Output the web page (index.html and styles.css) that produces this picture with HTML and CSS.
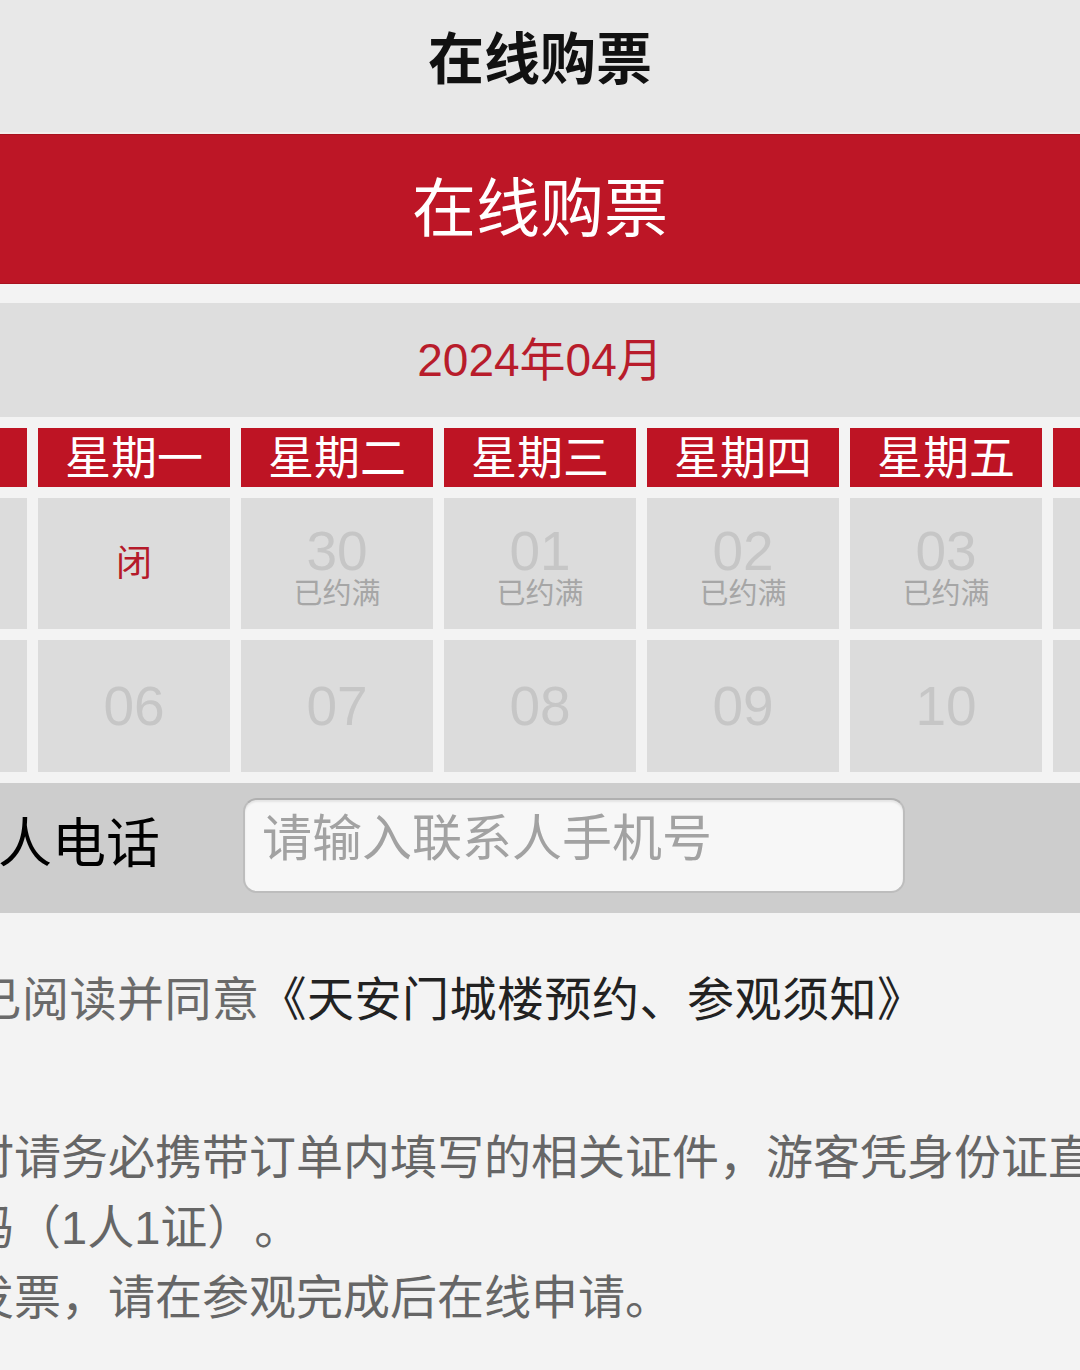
FILE: index.html
```html
<!DOCTYPE html>
<html lang="zh-CN">
<head>
	<meta charset="UTF-8">
	<title>在线购票</title>
	<link rel="stylesheet" href="styles.css">
</head>
<body>
	<div class="page">
		<div class="topbar">在线购票</div>
		<div class="banner">在线购票</div>
		<div class="month">2024年04月</div>

		<div class="calendar">
			<div class="week">星期日</div>
			<div class="week">星期一</div>
			<div class="week">星期二</div>
			<div class="week">星期三</div>
			<div class="week">星期四</div>
			<div class="week">星期五</div>
			<div class="week">星期六</div>

			<div class="day full"><span class="num">28</span><span class="state">已约满</span></div>
			<div class="day"><span class="closed">闭</span></div>
			<div class="day full"><span class="num">30</span><span class="state">已约满</span></div>
			<div class="day full"><span class="num">01</span><span class="state">已约满</span></div>
			<div class="day full"><span class="num">02</span><span class="state">已约满</span></div>
			<div class="day full"><span class="num">03</span><span class="state">已约满</span></div>
			<div class="day full"><span class="num">04</span><span class="state">已约满</span></div>

			<div class="day"><span class="num">05</span></div>
			<div class="day"><span class="num">06</span></div>
			<div class="day"><span class="num">07</span></div>
			<div class="day"><span class="num">08</span></div>
			<div class="day"><span class="num">09</span></div>
			<div class="day"><span class="num">10</span></div>
			<div class="day"><span class="num">11</span></div>
		</div>

		<div class="phone">
			<label for="tel">联系人电话</label>
			<input id="tel" type="text" placeholder="请输入联系人手机号">
		</div>

		<p class="agree">我已阅读并同意<a href="#">《天安门城楼预约、参观须知》</a></p>

		<div class="notes">
			<p>参观时请务必携带订单内填写的相关证件，游客凭身份证直接入园</p>
			<p>件号码（1人1证）。</p>
			<p>开具发票，请在参观完成后在线申请。</p>
		</div>
	</div>
</body>
</html>
```

FILE: styles.css
```css
*{
	margin: 0;
	padding: 0;
	box-sizing: border-box;
}
body{
	background: #f3f3f3;
	overflow: hidden;
	font-family: "Liberation Sans", "Noto Sans CJK SC", sans-serif;
	text-spacing-trim: space-all;
}
.page{
	width: 1420px;
	margin-left: -170px;
}
.topbar{
	height: 134px;
	background: #e8e8e8;
	border-bottom: 2px solid #f2eeec;
	text-align: center;
	font: bold 56px/110px "Noto Sans CJK SC", sans-serif;
	color: #111;
}
.banner{
	height: 150px;
	background: #bd1626;
	border-top: 1px solid #a8121f;
	border-bottom: 1px solid #a8121f;
	text-align: center;
	font: 64px/137px "Noto Sans CJK SC", sans-serif;
	color: #fff;
}
.month{
	height: 114px;
	margin-top: 19px;
	background: #dedede;
	text-align: center;
	font-size: 46px;
	line-height: 114px;
	color: #b81c2b;
}
.calendar{
	display: grid;
	grid-template-columns: repeat(7, 192px);
	grid-template-rows: 59px 131px 132px;
	gap: 11px;
	padding: 11px 5px;
}
.week{
	background: #be1424;
	color: #fff;
	text-align: center;
	font: 46px/52px "Noto Sans CJK SC", sans-serif;
}
.day{
	background: #dcdcdc;
	display: flex;
	flex-direction: column;
	align-items: center;
	justify-content: center;
}
.day.full{
	padding-top: 11px;
}
.day .num{
	font-size: 55px;
	line-height: 50px;
	color: #c6c6c6;
}
.day .state{
	font-size: 29px;
	line-height: 36px;
	color: #a6a6a6;
}
.day .closed{
	font-size: 36px;
	line-height: 40px;
	color: #b51a2a;
}
.phone{
	height: 130px;
	background: #cdcdcd;
	display: flex;
	align-items: flex-start;
	padding-left: 60px;
}
.phone label{
	width: 353px;
	margin-top: 22px;
	font: 54px/70px "Noto Sans CJK SC", sans-serif;
	color: #000;
}
.phone input{
	width: 662px;
	height: 95px;
	margin-top: 15px;
	border: 2px solid #bdbdbd;
	border-top-color: #b0b0b0;
	border-radius: 14px;
	background: #f7f7f7;
	box-shadow: inset 0 2px 2px rgba(0,0,0,.08);
	padding: 0 0 14px 17px;
	font-family: "Liberation Sans", "Noto Sans CJK SC", sans-serif;
	font-size: 50px;
	outline: none;
}
.phone input::placeholder{
	color: #a2a2a2;
}
.agree{
	margin-top: 52px;
	padding-left: 97px;
	font-size: 47px;
	line-height: 70px;
	letter-spacing: 0.5px;
	color: #6a6a6a;
	white-space: nowrap;
}
.agree a{
	color: #222;
	text-decoration: none;
}
.notes{
	margin-top: 88px;
	padding-left: 43px;
	font-size: 47px;
	line-height: 70px;
	color: #666;
	white-space: nowrap;
}
```
